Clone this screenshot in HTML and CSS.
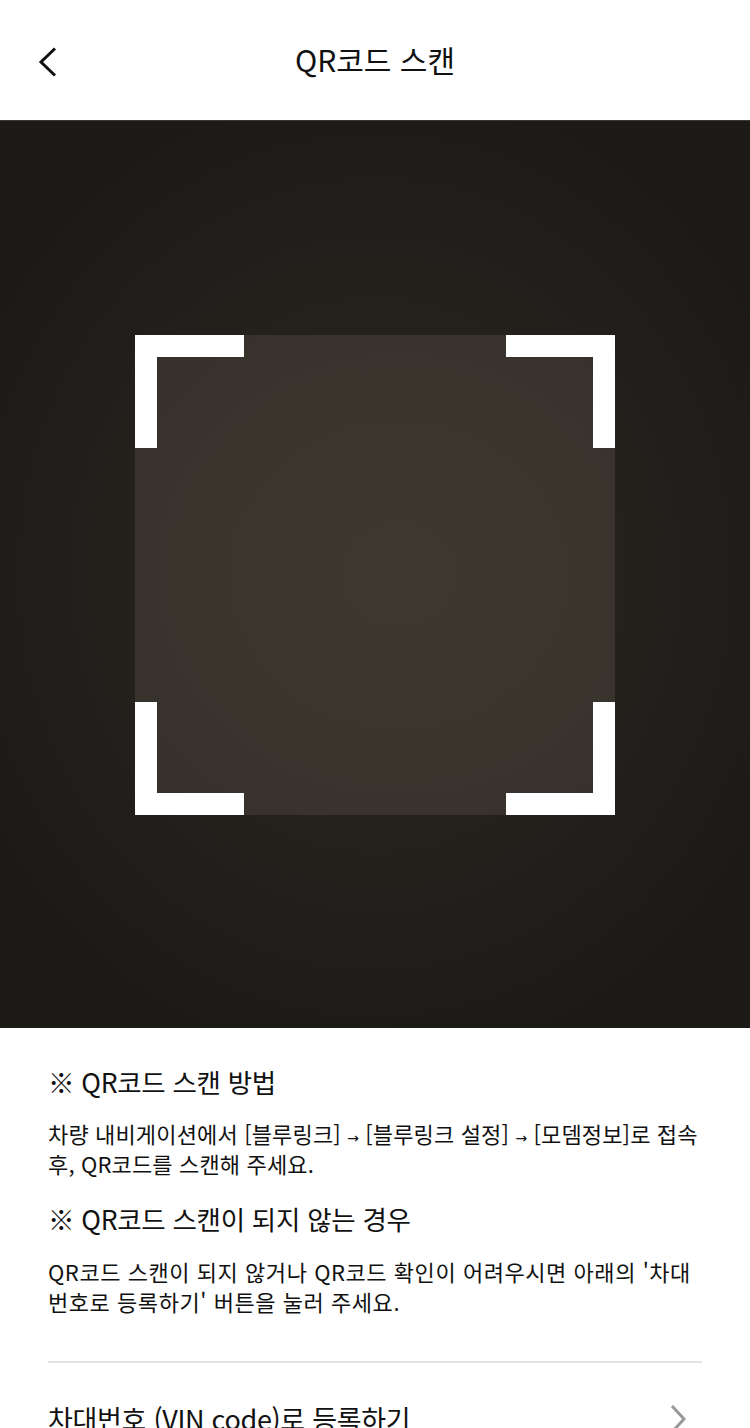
FILE: index.html
```html
<!DOCTYPE html>
<html lang="ko">
<head>
<meta charset="utf-8">
<title>QR코드 스캔</title>
<link rel="stylesheet" href="styles.css">
</head>
<body>
<div class="page">
  <header class="topbar">
    <button class="back" aria-label="뒤로">
      <svg width="24" height="32" viewBox="0 0 24 32"><path d="M19 2.5 L5 16 L19 29.5" fill="none" stroke="#111" stroke-width="3"/></svg>
    </button>
    <h1 class="title">QR코드 스캔</h1>
  </header>

  <section class="camera">
    <div class="frame">
      <span class="corner tl"></span>
      <span class="corner tr"></span>
      <span class="corner bl"></span>
      <span class="corner br"></span>
    </div>
  </section>

  <section class="guide">
    <h2 class="guide-title">※ QR코드 스캔 방법</h2>
    <p class="guide-text">차량 내비게이션에서 [블루링크] <span class="arrow">→</span> [블루링크 설정] <span class="arrow">→</span> [모뎀정보]로 접속 후, QR코드를 스캔해 주세요.</p>
    <h2 class="guide-title second">※ QR코드 스캔이 되지 않는 경우</h2>
    <p class="guide-text wide">QR코드 스캔이 되지 않거나 QR코드 확인이 어려우시면 아래의 '차대번호로 등록하기' 버튼을 눌러 주세요.</p>
    <div class="divider"></div>
    <a class="vin-link" href="#">
      <span>차대번호 (VIN code)로 등록하기</span>
      <svg width="20" height="30" viewBox="0 0 20 30"><path d="M4 2 L16 15 L4 28" fill="none" stroke="#999" stroke-width="3"/></svg>
    </a>
  </section>
</div>
</body>
</html>
```
FILE: styles.css
```css
* { box-sizing: border-box; }
html, body { margin: 0; padding: 0; background: #fff; }
body {
  font-family: "Noto Sans CJK KR", "Noto Sans", sans-serif;
  color: #111;
  overflow: hidden;
}
.page { width: 750px; height: 1428px; overflow: hidden; }

.topbar {
  position: relative;
  height: 120px;
  display: flex;
  align-items: center;
  justify-content: center;
}
.back {
  position: absolute;
  left: 36px;
  top: 46px;
  border: 0;
  background: none;
  padding: 0;
  width: 24px;
  height: 32px;
  display: flex;
}
.title {
  margin: 0;
  font-size: 30px;
  font-weight: 400;
  letter-spacing: 0;
  line-height: 1;
  margin-top: -2px;
}

.camera {
  height: 908px;
  display: flex;
  align-items: center;
  justify-content: center;
  background:
    radial-gradient(ellipse 60% 55% at 50% 50%, #2c2923 0%, #24211d 55%, #1c1a17 100%);
  border-top: 1px solid #3a3835;
}
.frame {
  position: relative;
  width: 480px;
  height: 480px;
  background: radial-gradient(ellipse at 55% 50%, #3e392f 0%, #38332c 70%, #34302a 100%);
}
.corner {
  position: absolute;
  width: 109px;
  height: 113px;
  border: 0 solid #fff;
}
.tl { left: 0; top: 0; border-left-width: 22px; border-top-width: 22px; }
.tr { right: 0; top: 0; border-right-width: 22px; border-top-width: 22px; }
.bl { left: 0; bottom: 0; border-left-width: 22px; border-bottom-width: 22px; }
.br { right: 0; bottom: 0; border-right-width: 22px; border-bottom-width: 22px; }

.guide {
  padding: 36px 48px 0;
}
.guide-title {
  margin: 0;
  font-size: 26.5px;
  font-weight: 400;
  line-height: 36px;
  letter-spacing: -0.3px;
}
.guide-title.second { margin-top: 23px; }
.guide-text {
  margin: 18px 0 0;
  font-size: 22px;
  line-height: 30px;
  letter-spacing: 0.15px;
}
.guide-text.wide { letter-spacing: 0.55px; margin-top: 19px; }
.arrow {
  font-family: "DejaVu Sans", sans-serif;
  font-size: 14px;
  line-height: 1;
  letter-spacing: 0;
}
.divider {
  height: 2px;
  background: #e2e2e2;
  margin-top: 45px;
}
.vin-link {
  display: flex;
  align-items: center;
  justify-content: space-between;
  padding: 38px 14px 0 0;
  color: #111;
  text-decoration: none;
  font-size: 27px;
  letter-spacing: -0.3px;
  line-height: 36px;
}
```
